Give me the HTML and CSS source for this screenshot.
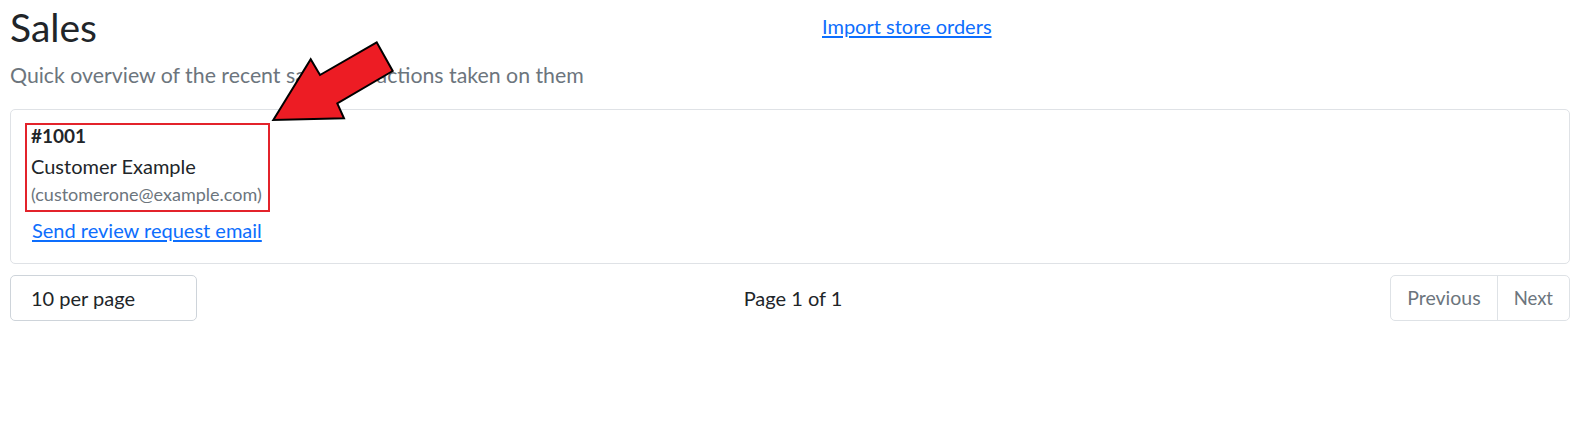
FILE: index.html
```html
<!DOCTYPE html>
<html lang="en">
<head>
<meta charset="utf-8">
<title>Sales</title>
<link rel="stylesheet" href="styles.css">
</head>
<body>
<div class="page">
  <header class="header">
    <div class="title-col">
      <h1 class="title">Sales</h1>
      <p class="lead">Quick overview of the recent sales and actions taken on them</p>
    </div>
    <div class="action-col">
      <a class="link import-link" href="#">Import store orders</a>
    </div>
  </header>

  <section class="card">
    <div class="order-box">
      <div class="order-id">#1001</div>
      <div class="order-name">Customer Example</div>
      <div class="order-email">(customerone@example.com)</div>
    </div>
    <a class="link review-link" href="#">Send review request email</a>
  </section>

  <div class="footer-row">
    <div class="per-page">10 per page</div>
    <div class="page-info">Page 1 of 1</div>
    <nav class="pager">
      <span class="pager-item">Previous</span>
      <span class="pager-item">Next</span>
    </nav>
  </div>

  <svg class="annotation-arrow" width="140" height="95" viewBox="260 35 140 95" aria-hidden="true">
    <polygon points="273.3,120 310.7,59.3 320,75 376.7,42.3 392.7,71 337.3,103.3 344,118.3" fill="#ed1c24" stroke="#000" stroke-width="2" stroke-linejoin="miter"/>
  </svg>
</div>
</body>
</html>
```
FILE: styles.css
```css
html, body {
  margin: 0;
  padding: 0;
  background: #fff;
}

body {
  font-family: Lato, "Open Sans", "Liberation Sans", sans-serif;
  color: #212529;
}

.page {
  position: relative;
  padding: 3px 8px 0 10px;
}

.header {
  display: grid;
  grid-template-columns: 1fr 1fr;
}

.title {
  margin: 0;
  font-size: 39px;
  font-weight: 400;
  line-height: 48px;
  color: #212529;
}

.lead {
  margin: 8.5px 0 0 0;
  font-size: 21.3px;
  line-height: 30px;
  color: #6c757d;
}

.action-col {
  padding-top: 7.6px;
  padding-left: 32px;
}

.link {
  color: #0d6efd;
  text-decoration: underline;
  text-underline-offset: 2px;
}

.import-link {
  font-size: 20px;
  line-height: 30px;
}

.card {
  margin-top: 19.8px;
  border: 1px solid #dfe2e6;
  border-radius: 5px;
  padding: 13px 14px 21.3px 14px;
}

.order-box {
  display: inline-block;
  border: 2px solid #e3232b;
  padding: 0 6px 3.7px 4px;
}

.order-id {
  font-size: 19px;
  font-weight: 700;
  line-height: 22px;
}

.order-name {
  margin-top: 7px;
  font-size: 20px;
  line-height: 24px;
}

.order-email {
  margin-top: 3.7px;
  font-size: 18px;
  line-height: 24px;
  color: #6c757d;
}

.review-link {
  display: block;
  width: max-content;
  margin-top: 6.3px;
  margin-left: 7px;
  font-size: 20px;
  line-height: 24px;
}

.footer-row {
  margin-top: 11px;
  display: grid;
  grid-template-columns: 1fr auto 1fr;
  align-items: center;
}

.per-page {
  justify-self: start;
  box-sizing: border-box;
  width: 187px;
  height: 46px;
  border: 1px solid #ced4da;
  border-radius: 5px;
  padding-left: 20px;
  font-size: 20px;
  line-height: 44px;
  color: #212529;
}

.page-info {
  font-size: 20px;
  line-height: 44px;
  padding-left: 6px;
}

.pager {
  justify-self: end;
  display: flex;
  height: 46px;
  box-sizing: border-box;
  border: 1px solid #dee2e6;
  border-radius: 5px;
}

.pager-item {
  padding: 0 16px;
  font-size: 19.5px;
  line-height: 44px;
  color: #6c757d;
}

.pager-item + .pager-item {
  border-left: 1px solid #dee2e6;
  padding: 0 16px 0 16px;
  font-size: 18.5px;
}

.annotation-arrow {
  position: absolute;
  left: 260px;
  top: 35px;
  overflow: visible;
}
```
